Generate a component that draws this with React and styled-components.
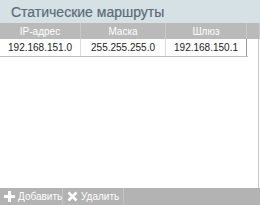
import React from "react";
import styled, { createGlobalStyle } from "styled-components";

const Global = createGlobalStyle`
  html, body { margin: 0; padding: 0; background: #fff; }
  body { font-family: "Liberation Sans", Arial, sans-serif; }
`;

const Panel = styled.div`
  width: 260px;
  height: 205px;
  display: flex;
  flex-direction: column;
  background: #fff;
`;

const Header = styled.div`
  height: 23px;
  flex: none;
  background: #d5e1e4;
  color: #5a6d78;
  font-size: 14px;
  display: flex;
  align-items: center;
  padding-left: 11px;
  padding-top: 1px;
  box-sizing: border-box;
  -webkit-text-stroke: 0.2px #5a6d78;
`;

const Grid = styled.div`
  display: grid;
  grid-template-columns: 81px 85px 81px 1fr;
`;

const HeadRow = styled(Grid)`
  height: 16px;
  background: #bababa;
  flex: none;
`;

const HeadCell = styled.div`
  color: #fff;
  font-size: 10px;
  display: flex;
  align-items: center;
  justify-content: center;
  border-right: 1px solid #c9c9c9;
`;

const Body = styled.div`
  flex: 1;
  border-right: 1px solid #c8c8c8;
  margin-right: 1px;
`;

const DataRow = styled(Grid)`
  height: 18px;
  grid-template-columns: 81px 85px 81px;
  width: 248px;
  box-sizing: border-box;
  border-bottom: 1px solid #bdbdbd;
`;

const DataCell = styled.div`
  font-size: 10px;
  color: #222;
  display: flex;
  align-items: center;
  justify-content: center;
  border-right: 1px solid ${p => (p.$last ? "#9a9a9a" : "#dcdcdc")};
`;

const Footer = styled.div`
  height: 17px;
  flex: none;
  background: #b3b3b3;
  display: flex;
`;

const Button = styled.div`
  display: flex;
  align-items: center;
  gap: 3px;
  padding: 0 0 0 4px;
  color: #fff;
  font-size: 10px;
  border-right: 1px solid #c4c4c4;
  width: ${p => p.$w}px;
  box-sizing: border-box;
  white-space: nowrap;
  svg { flex: none; }
`;

const Plus = () => (
  <svg width="11" height="11" viewBox="0 0 11 11">
    <path d="M4 0h3v4h4v3H7v4H4V7H0V4h4z" fill="#fff" />
  </svg>
);

const Cross = () => (
  <svg width="11" height="11" viewBox="0 0 11 11">
    <path d="M1.5 1.5l8 8M9.5 1.5l-8 8" stroke="#fff" strokeWidth="2.6" />
  </svg>
);

export default function App() {
  return (
    <>
      <Global />
      <Panel>
        <Header>Статические маршруты</Header>
        <HeadRow>
          <HeadCell>IP-адрес</HeadCell>
          <HeadCell>Маска</HeadCell>
          <HeadCell>Шлюз</HeadCell>
          <HeadCell />
        </HeadRow>
        <Body>
          <DataRow>
            <DataCell>192.168.151.0</DataCell>
            <DataCell>255.255.255.0</DataCell>
            <DataCell $last>192.168.150.1</DataCell>
          </DataRow>
        </Body>
        <Footer>
          <Button $w={63}><Plus />Добавить</Button>
          <Button $w={61}><Cross />Удалить</Button>
        </Footer>
      </Panel>
    </>
  );
}
